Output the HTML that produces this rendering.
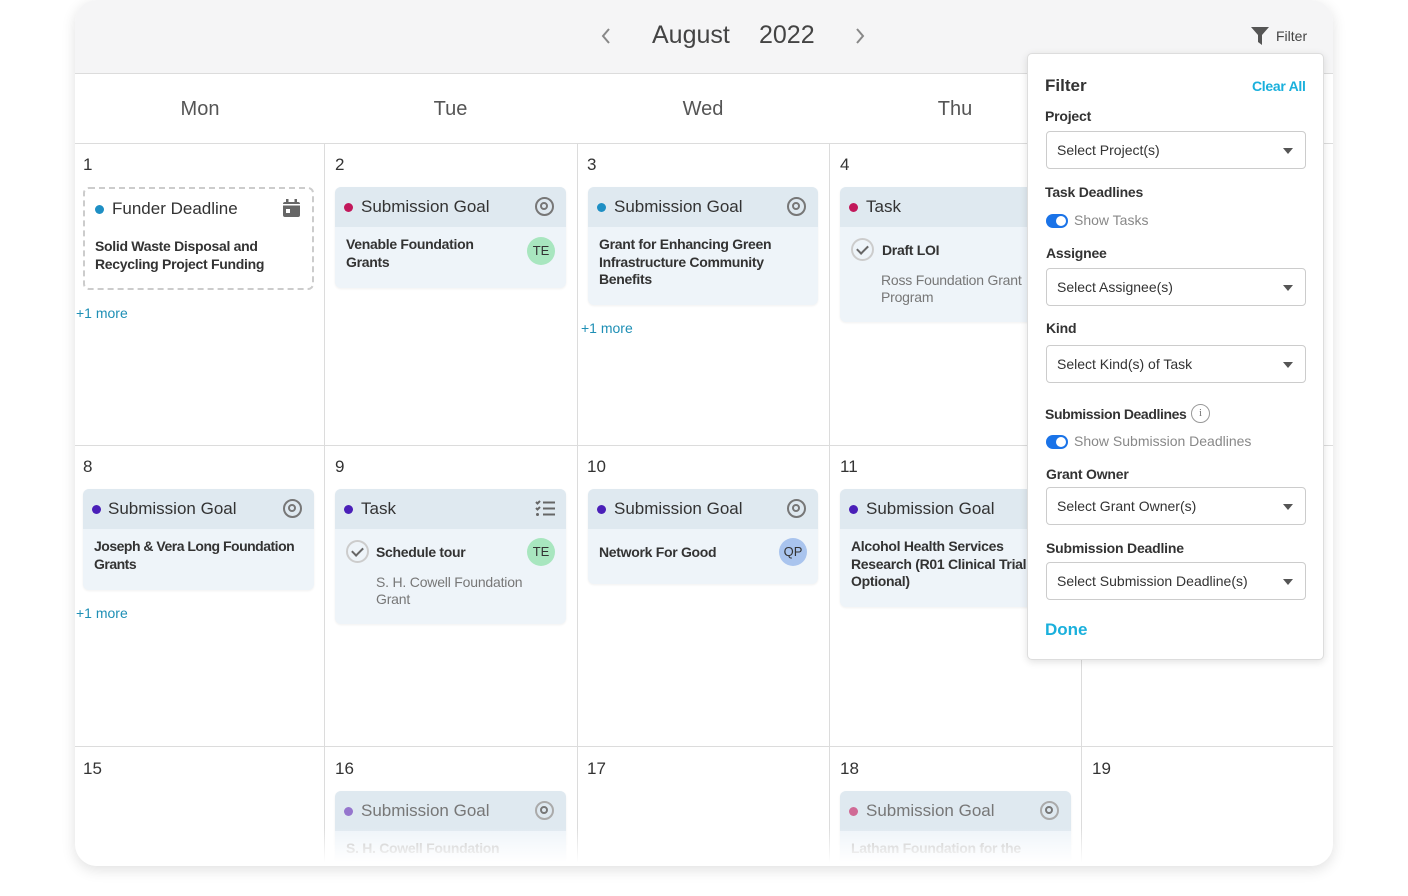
<!DOCTYPE html>
<html><head><meta charset="utf-8"><style>
*{box-sizing:border-box;margin:0;padding:0}
body{width:1408px;height:896px;background:#fff;font-family:"Liberation Sans",sans-serif;position:relative;overflow:hidden;color:#333}
.a{position:absolute}
#cal{left:75px;top:0;width:1258px;height:866px;border-radius:22px;overflow:hidden;background:#fff;box-shadow:0 4px 14px rgba(0,0,0,.12)}
.hd{left:0;top:0;width:1258px;height:74px;background:#f5f5f6;border-bottom:1px solid #dcdcdc}
.dn{top:74px;height:70px;border-bottom:1px solid #dcdcdc;font-size:20px;color:#555;text-align:center;line-height:70px;width:250px}
.vl{width:1px;background:#dcdcdc;top:144px;height:722px}
.hl{height:1px;background:#dcdcdc;left:0;width:1258px}
.num{font-size:17px;color:#333}
.card{border-radius:6px;background:#eef4f9;overflow:hidden;box-shadow:0 1px 2px rgba(0,0,0,.06)}
.ch{height:40px;background:#dfe9f0;font-size:17px;color:#333;line-height:40px;padding-left:26px;position:relative}
.dot{position:absolute;left:9px;top:16px;width:9px;height:9px;border-radius:50%}
.tg{position:absolute;right:12px;top:10px;width:19px;height:19px;border:2.5px solid #777;border-radius:50%}
.tg:after{content:"";position:absolute;left:3px;top:3px;width:8px;height:8px;border:2.5px solid #777;border-radius:50%;box-sizing:border-box}
.cb{padding:9px 11px;font-size:14px;font-weight:bold;color:#333;line-height:17.5px;position:relative;letter-spacing:-0.3px}
.av{position:absolute;right:11px;width:28px;height:28px;border-radius:50%;font-size:13px;font-weight:normal;line-height:28px;text-align:center;color:#333;letter-spacing:0}
.more{font-size:14px;color:#1e8fb5}
.ck{position:absolute;width:23px;height:23px;border:2px solid #ccc;border-radius:50%}
.ck:after{content:"";position:absolute;left:6px;top:3px;width:5px;height:9px;border:solid #666;border-width:0 2px 2px 0;transform:rotate(45deg)}
.sub{font-weight:normal;color:#777;font-size:14px}
#flt{left:1027px;top:53px;width:297px;height:607px;background:#fff;border:1px solid #ddd;border-radius:5px;box-shadow:0 2px 8px rgba(0,0,0,.12)}
.lb{font-size:14px;font-weight:bold;color:#333;letter-spacing:-0.2px}
.sel{left:18px;width:260px;height:38px;border:1px solid #ccc;border-radius:4px;font-size:14px;color:#333;line-height:36px;padding-left:10px}
.sel:after{content:"";position:absolute;right:12px;top:16px;border:5px solid transparent;border-top:6px solid #555;border-bottom:0}
.tog{left:18px;width:22px;height:14px;border-radius:7px;background:#1a73e8}
.tog:after{content:"";position:absolute;right:2px;top:2px;width:10px;height:10px;border-radius:50%;background:#fff}
.tl{font-size:14px;color:#888}
</style></head><body>
<div id="cal" class="a">
<div class="a hd"></div>
<svg class="a" style="left:526px;top:28px" width="10" height="16" viewBox="0 0 10 16"><path d="M8 1L2 8l6 7" stroke="#888" stroke-width="2" fill="none"/></svg>
<div class="a" style="left:577px;top:21px;font-size:25px;color:#444">August</div>
<div class="a" style="left:684px;top:21px;font-size:25px;color:#444">2022</div>
<svg class="a" style="left:780px;top:28px" width="10" height="16" viewBox="0 0 10 16"><path d="M2 1l6 7-6 7" stroke="#888" stroke-width="2" fill="none"/></svg>
<svg class="a" style="left:1176px;top:27px" width="18" height="18" viewBox="0 0 18 18"><path d="M0 0H18L11 8V18L7 15V8Z" fill="#555"/></svg>
<div class="a" style="left:1201px;top:28px;font-size:14px;color:#444">Filter</div>
<div class="a dn" style="left:0">Mon</div><div class="a dn" style="left:249px;width:253px">Tue</div><div class="a dn" style="left:502px;width:252px">Wed</div><div class="a dn" style="left:754px;width:252px">Thu</div><div class="a dn" style="left:1006px;width:252px">Fri</div>
<div class="a vl" style="left:249px"></div><div class="a vl" style="left:502px"></div><div class="a vl" style="left:754px"></div><div class="a vl" style="left:1006px"></div>
<div class="a hl" style="top:445px"></div><div class="a hl" style="top:746px"></div>

<div class="a num" style="left:8px;top:155px">1</div><div class="a num" style="left:260px;top:155px">2</div><div class="a num" style="left:512px;top:155px">3</div><div class="a num" style="left:765px;top:155px">4</div>
<div class="a num" style="left:8px;top:457px">8</div><div class="a num" style="left:260px;top:457px">9</div><div class="a num" style="left:512px;top:457px">10</div><div class="a num" style="left:765px;top:457px">11</div>
<div class="a num" style="left:8px;top:759px">15</div><div class="a num" style="left:260px;top:759px">16</div><div class="a num" style="left:512px;top:759px">17</div><div class="a num" style="left:765px;top:759px">18</div><div class="a num" style="left:1017px;top:759px">19</div>

<div class="a" style="left:8px;top:187px;width:231px;height:103px;border:2px dashed #ccc;border-radius:6px">
<div class="dot" style="left:10px;top:16px;background:#1e8fc4"></div>
<div class="a" style="left:27px;top:10px;font-size:17px">Funder Deadline</div>
<svg class="a" style="left:198px;top:10px" width="17" height="18" viewBox="0 0 17 18"><rect x="0" y="3" width="17" height="15" rx="2" fill="#666"/><rect x="3" y="0" width="2.5" height="5" fill="#666"/><rect x="11.5" y="0" width="2.5" height="5" fill="#666"/><rect x="0" y="5" width="17" height="1.5" fill="#fff"/><rect x="3" y="10" width="4" height="4" fill="#fff"/></svg>
<div class="a" style="left:10px;top:49px;font-size:14px;font-weight:bold;line-height:17.5px;letter-spacing:-0.3px">Solid Waste Disposal and<br>Recycling Project Funding</div>
</div>
<div class="a more" style="left:1px;top:305px">+1 more</div>

<div class="a card" style="left:260px;top:187px;width:231px;height:101px"><div class="ch"><div class="dot" style="background:#c2185b"></div>Submission Goal<div class="tg"></div></div><div class="cb">Venable Foundation<br>Grants<div class="av" style="top:10px;background:#a8e6bf">TE</div></div></div>

<div class="a card" style="left:513px;top:187px;width:230px;height:118px"><div class="ch"><div class="dot" style="background:#1e8fc4"></div>Submission Goal<div class="tg"></div></div><div class="cb">Grant for Enhancing Green<br>Infrastructure Community<br>Benefits</div></div>
<div class="a more" style="left:506px;top:320px">+1 more</div>

<div class="a card" style="left:765px;top:187px;width:231px;height:135px"><div class="ch"><div class="dot" style="background:#c2185b"></div>Task</div><div class="cb"><div class="ck" style="left:11px;top:11px"></div><div style="padding-left:31px;padding-top:6px">Draft LOI</div><div class="sub" style="padding-left:30px;padding-top:12px;line-height:17px;letter-spacing:-0.2px">Ross Foundation Grant<br>Program</div></div></div>

<div class="a card" style="left:8px;top:489px;width:231px;height:101px"><div class="ch" style="padding-left:25px"><div class="dot" style="background:#4a1fb8"></div>Submission Goal<div class="tg"></div></div><div class="cb" style="letter-spacing:-0.5px;white-space:nowrap">Joseph &amp; Vera Long Foundation<br>Grants</div></div>
<div class="a more" style="left:1px;top:605px">+1 more</div>

<div class="a card" style="left:260px;top:489px;width:231px;height:135px"><div class="ch"><div class="dot" style="background:#4a1fb8"></div>Task
<svg class="a" style="right:11px;top:11px" width="20" height="17" viewBox="0 0 20 17"><path d="M1 2l1.5 1.5L5 1M8 2.5h12M1 8l1.5 1.5L5 7M8 8.5h12M8 14.5h12" stroke="#666" stroke-width="2" fill="none"/><circle cx="2.5" cy="14.5" r="1.5" fill="#666"/></svg></div>
<div class="cb"><div class="ck" style="left:11px;top:11px"></div><div style="padding-left:30px;padding-top:6px">Schedule tour</div><div class="av" style="top:9px;background:#a8e6bf">TE</div><div class="sub" style="padding-left:30px;padding-top:12px;line-height:17px;letter-spacing:-0.2px">S. H. Cowell Foundation<br>Grant</div></div></div>

<div class="a card" style="left:513px;top:489px;width:230px;height:95px"><div class="ch"><div class="dot" style="background:#4a1fb8"></div>Submission Goal<div class="tg"></div></div><div class="cb" style="padding-top:15px">Network For Good<div class="av" style="top:9px;background:#a9c4ee">QP</div></div></div>

<div class="a card" style="left:765px;top:489px;width:231px;height:118px"><div class="ch"><div class="dot" style="background:#4a1fb8"></div>Submission Goal</div><div class="cb" style="white-space:nowrap">Alcohol Health Services<br>Research (R01 Clinical Trial<br>Optional)</div></div>

<div class="a card" style="left:260px;top:791px;width:231px;height:101px"><div class="ch" style="color:#777"><div class="dot" style="background:#9575cd"></div>Submission Goal<div class="tg" style="border-color:#aaa"></div></div><div class="cb" style="color:#bbb">S. H. Cowell Foundation</div></div>
<div class="a card" style="left:765px;top:791px;width:231px;height:101px"><div class="ch" style="color:#777"><div class="dot" style="background:#d06a95"></div>Submission Goal<div class="tg" style="border-color:#aaa"></div></div><div class="cb" style="color:#bbb">Latham Foundation for the</div></div>
<div class="a" style="left:0;top:828px;width:1258px;height:38px;background:linear-gradient(rgba(255,255,255,0),#fff 90%)"></div>
</div>

<div id="flt" class="a">
<div class="a" style="left:17px;top:22px;font-size:17px;font-weight:bold;color:#333">Filter</div>
<div class="a" style="left:224px;top:24px;font-size:14px;font-weight:bold;color:#1ab0dc;letter-spacing:-0.3px">Clear All</div>
<div class="a lb" style="left:17px;top:54px">Project</div>
<div class="a sel" style="top:77px">Select Project(s)</div>
<div class="a lb" style="left:17px;top:130px">Task Deadlines</div>
<div class="a tog" style="top:160px"></div><div class="a tl" style="left:46px;top:158px">Show Tasks</div>
<div class="a lb" style="left:18px;top:191px">Assignee</div>
<div class="a sel" style="top:214px">Select Assignee(s)</div>
<div class="a lb" style="left:18px;top:266px">Kind</div>
<div class="a sel" style="top:291px">Select Kind(s) of Task</div>
<div class="a lb" style="left:17px;top:352px;letter-spacing:-0.4px">Submission Deadlines</div>
<div class="a" style="left:163px;top:350px;width:19px;height:19px;border:1.5px solid #999;border-radius:50%;font-size:11px;color:#777;text-align:center;line-height:16px;font-family:'Liberation Serif',serif">i</div>
<div class="a tog" style="top:381px"></div><div class="a tl" style="left:46px;top:379px">Show Submission Deadlines</div>
<div class="a lb" style="left:18px;top:412px">Grant Owner</div>
<div class="a sel" style="top:433px">Select Grant Owner(s)</div>
<div class="a lb" style="left:18px;top:486px">Submission Deadline</div>
<div class="a sel" style="top:508px">Select Submission Deadline(s)</div>
<div class="a" style="left:17px;top:566px;font-size:17px;font-weight:bold;color:#1ab0dc">Done</div>
</div>
</body></html>
